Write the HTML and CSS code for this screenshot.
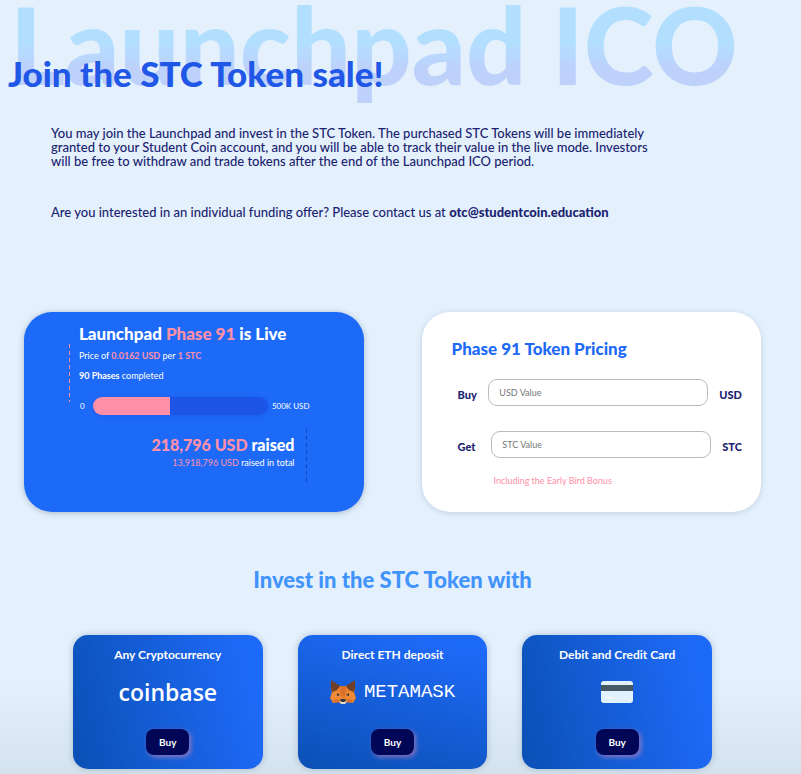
FILE: index.html
```
<!DOCTYPE html>
<html lang="en">
<head>
    <meta charset="UTF-8">
    <meta name="viewport" content="width=device-width, initial-scale=1.0">
    <title>Launchpad ICO</title>
    <link rel="stylesheet" href="styles.css">
</head>
<body>
    <header class="hero">
        <div class="hero-back">Launchpad ICO</div>
        <h1 class="hero-title">Join the STC Token sale!</h1>
    </header>

    <section class="intro">
        <p>You may join the Launchpad and invest in the STC Token. The purchased STC Tokens will be immediately<br>
        granted to your Student Coin account, and you will be able to track their value in the live mode. Investors<br>
        will be free to withdraw and trade tokens after the end of the Launchpad ICO period.</p>
        <p>Are you interested in an individual funding offer? Please contact us at <a href="mailto:otc@studentcoin.education">otc@studentcoin.education</a></p>
    </section>

    <main>
        <div class="panels">
            <section class="panel live">
                <div class="phase">
                    <h2>Launchpad <span class="pink">Phase 91</span> is Live</h2>
                    <div class="phase-info">
                        <p>Price of <b class="pink">0.0162 USD</b> per <b class="pink">1 STC</b></p>
                        <p><b>90 Phases</b> completed</p>
                    </div>
                </div>
                <div class="progress">
                    <span>0</span>
                    <div class="bar"><div class="bar-fill" style="width: 44%"></div></div>
                    <span>500K USD</span>
                </div>
                <div class="raised">
                    <h2><span class="pink">218,796 USD</span> raised</h2>
                    <p><span class="pink">13,918,796 USD</span> raised in total</p>
                </div>
            </section>

            <section class="panel pricing">
                <h2>Phase 91 Token Pricing</h2>
                <form>
                    <div class="field">
                        <label for="usd">Buy</label>
                        <input type="text" id="usd" placeholder="USD Value">
                        <span>USD</span>
                    </div>
                    <div class="field">
                        <label for="stc">Get</label>
                        <input type="text" id="stc" placeholder="STC Value">
                        <span>STC</span>
                    </div>
                </form>
                <p class="bonus">Including the Early Bird Bonus</p>
            </section>
        </div>

        <h2 class="invest-title">Invest in the STC Token with</h2>

        <div class="methods">
            <section class="method">
                <h3>Any Cryptocurrency</h3>
                <div class="logo coinbase">coinbase</div>
                <button type="button">Buy</button>
            </section>
            <section class="method eth">
                <h3>Direct ETH deposit</h3>
                <div class="logo metamask">
                    <svg width="26" height="24" viewBox="0 0 26 24" aria-hidden="true">
                        <path fill="#e5812f" d="M1 1 9 6h8l8-5v8l-1 3 2 6-3 5-6-1-2 2h-4l-2-2-6 1-3-5 2-6-1-3z"/>
                        <path fill="#703f28" d="M1 0l9 6-3 4-5 2-1-4zM25 0l-9 6 3 4 5 2 1-4z"/>
                        <path fill="#f08a38" d="M2 13l6-2 3 6-3 4-7-2zM24 13l-6-2-3 6 3 4 7-2z"/>
                        <path fill="#d9702a" d="M10 6h6l-1 10h-4zM3 20l5-1 2 3-5 1zM23 20l-5-1-2 3 5 1z"/>
                        <path fill="#303744" d="M7 13l3 2-3 1zM19 13l-3 2 3 1zM11 19h4l1 2-2 1h-2l-2-1z"/>
                        <path fill="#e5dcd0" d="M9 21l3 1h2l3-1-2 3h-4z"/>
                    </svg>
                    <span>METAMASK</span>
                </div>
                <button type="button">Buy</button>
            </section>
            <section class="method">
                <h3>Debit and Credit Card</h3>
                <div class="logo">
                    <svg width="32" height="22" viewBox="0 0 32 22" aria-hidden="true">
                        <rect width="32" height="22" rx="3" fill="#e1f1fd"/>
                        <rect y="4" width="32" height="6" fill="#465a65"/>
                        <rect x="4" y="16" width="8" height="1" fill="#fff"/>
                    </svg>
                </div>
                <button type="button">Buy</button>
            </section>
        </div>
    </main>
</body>
</html>
```

FILE: styles.css
```
:root {
    --page: #e4f1fd;
    --blue: #1e6af8;
    --navy: #1b2370;
    --pink: #ff90a8;
}
* {
    box-sizing: border-box;
}
body {
    margin: 0;
    min-height: 100vh;
    font-family: Lato, "Liberation Sans", sans-serif;
    color: var(--navy);
    background: linear-gradient(var(--page) 88%, #d5e3ee);
}
h1, h2, h3, p {
    margin: 0;
}
.hero {
    display: grid;
    padding: 0 8px;
    height: 126px;
}
.hero-back, .hero-title {
    grid-area: 1 / 1;
    white-space: nowrap;
}
.hero-back {
    padding-left: 2px;
    font-size: 106px;
    line-height: 88px;
    font-weight: 900;
    height: 126px;
    color: transparent;
    background: linear-gradient(#b3dfff 34%, #bdd1fb 54%, #bdd1fb);
    -webkit-background-clip: text;
    background-clip: text;
}
.hero-title {
    padding-top: 51px;
    font-size: 35px;
    line-height: 44px;
    font-weight: 900;
    color: #2057e6;
}
.intro {
    padding: 0 40px 0 51px;
    font-size: 13px;
    line-height: 14px;
    font-weight: 500;
}
.intro p {
    margin-bottom: 37px;
}
.intro a {
    color: inherit;
    font-weight: 900;
    text-decoration: none;
}
main {
    padding: 56px 40px 5px 24px;
}
.panels {
    display: grid;
    grid-template-columns: 1fr 1fr;
    gap: 58px;
}
.panel {
    height: 200px;
    border-radius: 28px;
    box-shadow: 0 1px 6px rgba(60, 80, 110, 0.35);
}
.panel h2 {
    font-size: 17px;
    line-height: 20px;
    font-weight: 900;
}
.pink {
    color: var(--pink);
}
.live {
    padding: 12px 54px 0 45px;
    color: #fff;
    background: var(--blue);
    font-size: 9px;
    line-height: 20px;
}
.phase h2 {
    padding-left: 10px;
}
.phase-info {
    height: 58px;
    padding: 2px 0 0 10px;
    background: repeating-linear-gradient(var(--pink) 0 4px, transparent 4px 7px) left / 1px 100% no-repeat;
}
.progress {
    display: flex;
    align-items: center;
    gap: 4px;
    padding-left: 11px;
    margin-top: -6px;
    font-size: 8px;
    white-space: nowrap;
}
.bar {
    flex: 1;
    height: 18px;
    margin-left: 4px;
    border-radius: 9px;
    overflow: hidden;
    background: #1c54e6;
    box-shadow: 0 1px 5px rgba(28, 84, 230, 0.6);
}
.bar-fill {
    height: 100%;
    background: var(--pink);
}
.raised {
    height: 54px;
    margin: 13px 3px 0 0;
    padding: 6px 12px 0 0;
    background: repeating-linear-gradient(#1747bd 0 4px, transparent 4px 7px) right / 1px 100% no-repeat;
    text-align: right;
}
.raised h2 {
    font-size: 16px;
}
.raised p {
    line-height: 16px;
}
.pricing {
    padding: 27px 19px 0 30px;
    background: #fff;
    box-shadow: 0 1px 6px rgba(60, 80, 110, 0.2);
}
.pricing h2 {
    color: var(--blue);
}
.field {
    display: flex;
    align-items: center;
    height: 28px;
    margin: 19px 0 24px;
    padding-left: 6px;
    font-size: 11px;
    font-weight: 900;
}
.field label, .field span {
    padding-top: 4px;
}
.field label {
    flex: 1;
}
.field span {
    margin-left: 11px;
}
.field input {
    width: 220px;
    height: 27px;
    padding: 0 10px;
    border: 1px solid #bbb;
    border-radius: 9px;
    background: #fff;
    font: 9px Lato, sans-serif;
}
.field input::placeholder {
    color: #777;
}
.bonus {
    padding-left: 42px;
    margin-top: -8px;
    font-size: 9px;
    line-height: 14px;
    color: var(--pink);
}
.invest-title {
    margin: 54px 0 41px;
    text-align: center;
    font-size: 22px;
    line-height: 28px;
    font-weight: 900;
    color: #4293fb;
}
.methods {
    display: grid;
    grid-template-columns: repeat(3, 1fr);
    gap: 35px;
    padding: 0 49px;
}
.method {
    display: flex;
    flex-direction: column;
    align-items: center;
    height: 134px;
    padding-top: 10px;
    border-radius: 15px;
    color: #fff;
    background: linear-gradient(75deg, #0b50b5, #1e6af8 90%);
    box-shadow: 0 0 7px rgba(60, 80, 110, 0.3);
}
.method.eth {
    background: linear-gradient(15deg, #0b50b5, #1e6af8 90%);
}
.method h3 {
    font-size: 12px;
    line-height: 20px;
    font-weight: 700;
    white-space: nowrap;
}
.logo {
    display: flex;
    align-items: center;
    height: 54px;
}
.coinbase {
    font: 600 23px "Open Sans", sans-serif;
}
.metamask {
    gap: 8px;
    font: 19px "Liberation Mono", monospace;
}
.method button {
    width: 43px;
    height: 26px;
    margin-top: 10px;
    padding: 0;
    border: 0;
    border-radius: 8px;
    font: 700 10px Lato, sans-serif;
    color: #fff;
    background: #020657;
    box-shadow: 2px 2px 5px rgba(255, 144, 168, 0.5);
    cursor: pointer;
}
```
